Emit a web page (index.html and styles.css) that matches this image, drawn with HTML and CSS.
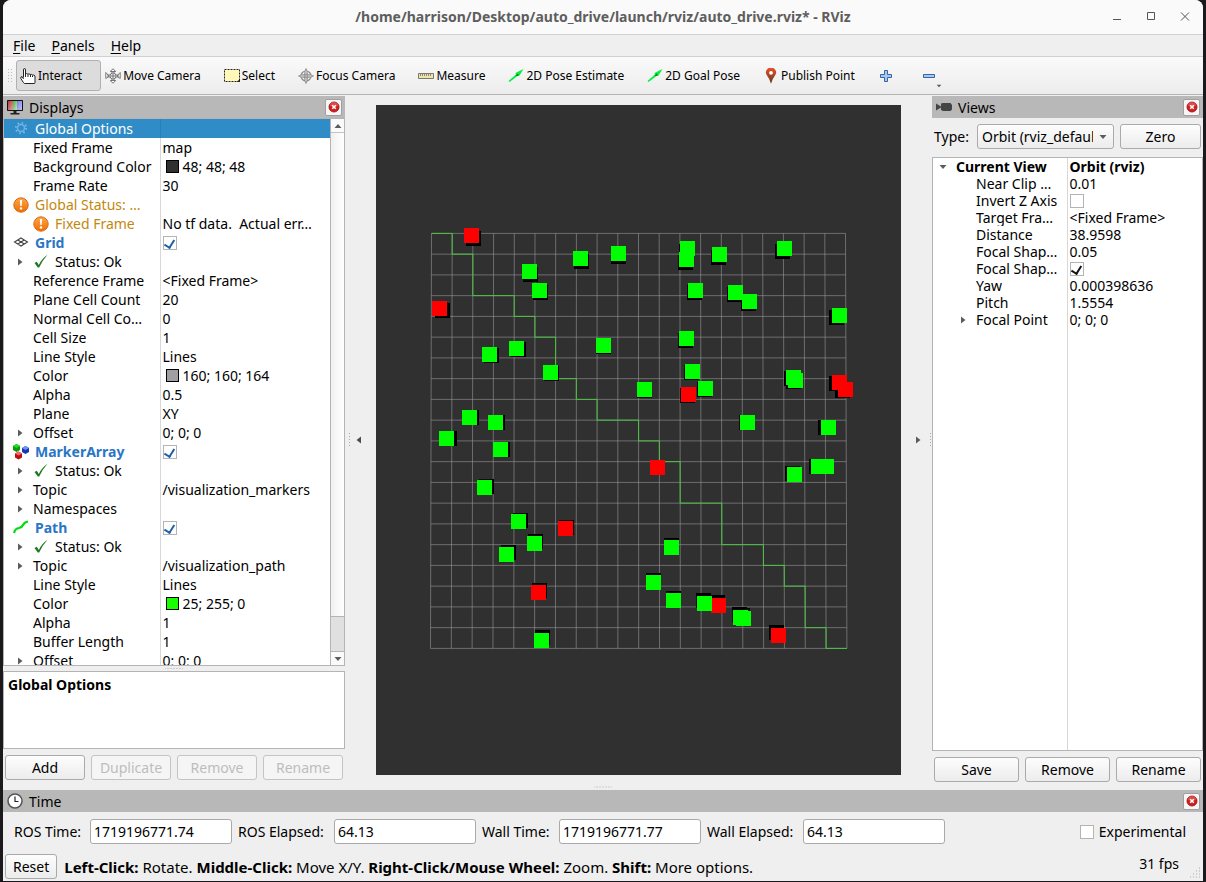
FILE: index.html
```html
<!DOCTYPE html>
<html lang="en">
<head>
<meta charset="utf-8">
<title>/home/harrison/Desktop/auto_drive/launch/rviz/auto_drive.rviz* - RViz</title>
<link rel="stylesheet" href="styles.css">
</head>
<body>
<svg class="defs" aria-hidden="true">
  <defs>
    <linearGradient id="g-orange" x1="0" y1="0" x2="0" y2="1"><stop offset="0" stop-color="#ffa64a"/><stop offset="1" stop-color="#ee6d00"/></linearGradient>
    <linearGradient id="g-pin" x1="0" y1="0" x2="0" y2="1"><stop offset="0" stop-color="#f0512a"/><stop offset="1" stop-color="#5a3a1c"/></linearGradient>
    <linearGradient id="g-r" x1="0" y1="0" x2="1" y2="1"><stop offset="0" stop-color="#b03a3a"/><stop offset="1" stop-color="#e8a0a0"/></linearGradient>
    <linearGradient id="g-g" x1="0" y1="0" x2="1" y2="1"><stop offset="0" stop-color="#4fae4f"/><stop offset="1" stop-color="#b4ecb4"/></linearGradient>
    <linearGradient id="g-b" x1="0" y1="0" x2="1" y2="1"><stop offset="0" stop-color="#7a7ae0"/><stop offset="1" stop-color="#c4c4fa"/></linearGradient>
    <symbol id="close" viewBox="0 0 12 12"><circle cx="6" cy="6" r="5" fill="#cf1f1f" stroke="#a40000" stroke-width=".8"/><path d="M2 5a4 4 0 0 1 8 0q-4 1.500-8 0" fill="#e56a6a" opacity=".6"/><path d="M4.200 4.200l3.600 3.600M7.800 4.200L4.200 7.800" stroke="#fff" stroke-width="1.500"/></symbol>
    <symbol id="warn" viewBox="0 0 16 16"><circle cx="8" cy="8" r="7.200" fill="url(#g-orange)" stroke="#d66a12" stroke-width="1"/><path d="M6.900 3h2.200l-.4 6H7.300z" fill="#fff"/><circle cx="8" cy="11.500" r="1.200" fill="#fff"/></symbol>
    <symbol id="ok" viewBox="0 0 16 16"><path d="M1.500 9l2.300-1.200 2 3.200Q8.500 5 14.500 .8 9 7 6.200 13.500H4.800z" fill="#1f7a1f"/></symbol>
    <symbol id="arrow" viewBox="0 0 16 16"><path d="M.5 13L8 6.500 7.500 5 15.500 1 11.500 7.500 9.500 8 1.500 14z" fill="#00f03c"/><path d="M7.500 8l2-2.500 1.500 2z" fill="#087a20"/></symbol>
    <symbol id="tri-r" viewBox="0 0 6 8"><path d="M1 0.500L5.500 4 1 7.500z" fill="#5c5c5c"/></symbol>
    <symbol id="tri-l" viewBox="0 0 6 8"><path d="M5 0.500L.5 4 5 7.500z" fill="#4c4c4c"/></symbol>
    <symbol id="tri-d" viewBox="0 0 8 6"><path d="M0.500 1h7L4 5z" fill="#5c5c5c"/></symbol>
    <symbol id="tri-u" viewBox="0 0 8 6"><path d="M0.500 5h7L4 1z" fill="#5c5c5c"/></symbol>
  </defs>
</svg>

<div class="window">
  <header class="titlebar">
    <h1>/home/harrison/Desktop/auto_drive/launch/rviz/auto_drive.rviz* - RViz</h1>
    <div class="winctl">
      <button type="button" aria-label="Minimize"><svg width="12" height="12"><path d="M2 8.500h8" stroke="#555"/></svg></button>
      <button type="button" aria-label="Maximize"><svg width="12" height="12"><path d="M2.500 1.500h7v7h-7z" fill="none" stroke="#555"/></svg></button>
      <button type="button" aria-label="Close"><svg width="12" height="12"><path d="M2 1.500l8 8M10 1.500l-8 8" stroke="#555"/></svg></button>
    </div>
  </header>

  <nav class="menubar">
    <button type="button"><u>F</u>ile</button>
    <button type="button"><u>P</u>anels</button>
    <button type="button"><u>H</u>elp</button>
  </nav>

  <div class="toolbar" role="toolbar">
    <span class="grip"></span>
    <button type="button" class="tool active"><svg width="16" height="16" viewBox="0 0 16 16"><path d="M3.500 9.500V2q0-1.500 1-1.500t1 1.500v4q1.200-1 2.300.2 1.200-.8 2.300.3 1.200-.6 2.300.5 1.500-.5 2.600 1v6.500q0 1-1 1H4.500Q3 14.500 2.500 13L.8 10.500Q.5 8.500 2 8.500l1.500 2.500" fill="#fff" stroke="#222"/><path d="M5.500 6v3M8 6.500V9M10.500 7v2M12.500 7.500V9" stroke="#222"/></svg>Interact</button>
    <button type="button" class="tool"><svg width="16" height="16" viewBox="0 0 16 16"><path d="M8 .8l2.800 2.700H5.200zM8 15.200l-2.800-2.700h5.600zM.8 4.500v6L4 8zM15.200 4.500v6L12 8z" fill="#fff" stroke="#777"/><path d="M7 3.500v9M9 3.500v9M2 7h12M2 9h12" stroke="#777"/><circle cx="8" cy="8" r="3" fill="#eee" stroke="#777"/><path d="M8 6v4M6 8h4" stroke="#777"/></svg>Move Camera</button>
    <button type="button" class="tool"><svg width="16" height="16" viewBox="0 0 16 16"><path d="M.5 1.500h15v12H.5z" fill="#fff8b8" stroke="#222" stroke-dasharray="2 1"/><path d="M12.500 14h3.500v-3z" fill="#222"/></svg>Select</button>
    <button type="button" class="tool"><svg width="16" height="16" viewBox="0 0 16 16"><circle cx="8" cy="8" r="5" fill="none" stroke="#888" stroke-width="1.200"/><circle cx="8" cy="8" r="2.500" fill="none" stroke="#888"/><path d="M8 .5l1.200 3v9L8 15.500l-1.200-3v-9zM.5 8l3-1.200h9l3 1.200-3 1.200h-9z" fill="#ccc" stroke="#888" stroke-width=".8"/></svg>Focus Camera</button>
    <button type="button" class="tool"><svg width="16" height="16" viewBox="0 0 16 16"><path d="M.5 5.500h15v5H.5z" fill="#f0e6a0" stroke="#777"/><path d="M2.500 6v2M4.500 6v2M6.500 6v2M8.500 6v2M10.500 6v2M12.500 6v2" stroke="#888"/></svg>Measure</button>
    <button type="button" class="tool"><svg width="16" height="16"><use href="#arrow"/></svg>2D Pose Estimate</button>
    <button type="button" class="tool"><svg width="16" height="16"><use href="#arrow"/></svg>2D Goal Pose</button>
    <button type="button" class="tool"><svg width="16" height="16" viewBox="0 0 16 16"><path d="M8 15.800Q6.800 11 4 7.500a5 5 0 1 1 8 0Q9.200 11 8 15.800z" fill="url(#g-pin)"/><circle cx="8" cy="4.800" r="1.900" fill="#fff"/></svg>Publish Point</button>
    <button type="button" class="tool" aria-label="Add tool"><svg width="16" height="16" viewBox="0 0 16 16"><path d="M6.500 2.500h3v4h4v3h-4v4h-3v-4h-4v-3h4z" fill="#a9c8ec" stroke="#3465a4"/></svg></button>
    <button type="button" class="tool drop" aria-label="Remove tool"><svg width="16" height="16" viewBox="0 0 16 16"><path d="M2.500 6.500h11v3h-11z" fill="#a9c8ec" stroke="#3465a4"/></svg><svg class="caret" width="6" height="4" viewBox="0 0 8 6"><use href="#tri-d"/></svg></button>
  </div>

  <main class="workspace">
    <section class="dock displays">
      <header class="docktitle">
        <svg width="16" height="16" viewBox="0 0 16 16"><path d="M.5 1.500h15v10H.5z" fill="#222" stroke="#111"/><path d="M1 2h5v9H1z" fill="url(#g-r)"/><path d="M6 2h4v9H6z" fill="url(#g-g)"/><path d="M10 2h5v9h-5z" fill="url(#g-b)"/><path d="M6.500 12h3v2.500h-3zM3.500 14h9v1.500h-9z" fill="#222"/></svg>
        <h2>Displays</h2>
        <button type="button" class="x" aria-label="Close Displays"><svg width="12" height="12"><use href="#close"/></svg></button>
      </header>
      <div class="treebox">
        <div class="tree">
          <table>
            <colgroup><col class="c-name"><col></colgroup>
            <tbody>
              <tr class="sel"><td><div class="n top"><svg width="16" height="16" viewBox="0 0 16 16"><circle cx="8" cy="7" r="3.500" fill="none" stroke="#6fb3ea" stroke-width="1.500"/><circle cx="8" cy="7" r="5.200" fill="none" stroke="#7ab8ea" stroke-width="1.800" stroke-dasharray="1.600 2.480"/></svg>Global Options</div></td><td></td></tr>
              <tr><td><div class="n"><i></i>Fixed Frame</div></td><td>map</td></tr>
              <tr><td><div class="n"><i></i>Background Color</div></td><td><span class="sw dark"></span>48; 48; 48</td></tr>
              <tr><td><div class="n"><i></i>Frame Rate</div></td><td>30</td></tr>
              <tr class="warn"><td><div class="n top"><svg width="16" height="16"><use href="#warn"/></svg>Global Status: …</div></td><td></td></tr>
              <tr><td><div class="n amber"><i></i><svg width="16" height="16"><use href="#warn"/></svg>Fixed Frame</div></td><td>No tf data.&nbsp; Actual err…</td></tr>
              <tr class="disp"><td><div class="n top"><svg width="16" height="16" viewBox="0 0 16 16"><path d="M8 3l6.500 4L8 11 1.500 7zM4.800 5l6.500 4M11.200 5L4.800 9" fill="none" stroke="#444" stroke-width="1.100"/></svg>Grid</div></td><td><input type="checkbox" checked aria-label="Grid enabled"></td></tr>
              <tr><td><div class="n"><i><svg width="6" height="8"><use href="#tri-r"/></svg></i><svg width="16" height="16"><use href="#ok"/></svg>Status: Ok</div></td><td></td></tr>
              <tr><td><div class="n"><i></i>Reference Frame</div></td><td>&lt;Fixed Frame&gt;</td></tr>
              <tr><td><div class="n"><i></i>Plane Cell Count</div></td><td>20</td></tr>
              <tr><td><div class="n"><i></i>Normal Cell Co…</div></td><td>0</td></tr>
              <tr><td><div class="n"><i></i>Cell Size</div></td><td>1</td></tr>
              <tr><td><div class="n"><i></i>Line Style</div></td><td>Lines</td></tr>
              <tr><td><div class="n"><i></i>Color</div></td><td><span class="sw grey"></span>160; 160; 164</td></tr>
              <tr><td><div class="n"><i></i>Alpha</div></td><td>0.5</td></tr>
              <tr><td><div class="n"><i></i>Plane</div></td><td>XY</td></tr>
              <tr><td><div class="n"><i><svg width="6" height="8"><use href="#tri-r"/></svg></i>Offset</div></td><td>0; 0; 0</td></tr>
              <tr class="disp"><td><div class="n top"><svg width="16" height="16" viewBox="0 0 16 16"><path d="M0 2l3.500-2L7 2v4L3.500 8 0 6z" fill="#0a9a0a"/><path d="M0 2l3.500-2L7 2 3.500 4z" fill="#19e619"/><path d="M9 4l3.500-2L16 4v4l-3.500 2L9 8z" fill="#1a35b8"/><path d="M9 4l3.500-2L16 4l-3.500 2z" fill="#6f92ff"/><path d="M2 9.500l3.500-2L9 9.500v4l-3.500 2-3.500-2z" fill="#b80f0f"/><path d="M2 9.500l3.500-2L9 9.500l-3.500 2z" fill="#f46a6a"/></svg>MarkerArray</div></td><td><input type="checkbox" checked aria-label="MarkerArray enabled"></td></tr>
              <tr><td><div class="n"><i><svg width="6" height="8"><use href="#tri-r"/></svg></i><svg width="16" height="16"><use href="#ok"/></svg>Status: Ok</div></td><td></td></tr>
              <tr><td><div class="n"><i><svg width="6" height="8"><use href="#tri-r"/></svg></i>Topic</div></td><td>/visualization_markers</td></tr>
              <tr><td><div class="n"><i><svg width="6" height="8"><use href="#tri-r"/></svg></i>Namespaces</div></td><td></td></tr>
              <tr class="disp"><td><div class="n top"><svg width="16" height="16" viewBox="0 0 16 16"><path d="M1 13Q2 8.500 6 8 9 7.500 10 5 11.500 2 15 1.500" fill="none" stroke="#00dc10" stroke-width="2.200"/></svg>Path</div></td><td><input type="checkbox" checked aria-label="Path enabled"></td></tr>
              <tr><td><div class="n"><i><svg width="6" height="8"><use href="#tri-r"/></svg></i><svg width="16" height="16"><use href="#ok"/></svg>Status: Ok</div></td><td></td></tr>
              <tr><td><div class="n"><i><svg width="6" height="8"><use href="#tri-r"/></svg></i>Topic</div></td><td>/visualization_path</td></tr>
              <tr><td><div class="n"><i></i>Line Style</div></td><td>Lines</td></tr>
              <tr><td><div class="n"><i></i>Color</div></td><td><span class="sw green"></span>25; 255; 0</td></tr>
              <tr><td><div class="n"><i></i>Alpha</div></td><td>1</td></tr>
              <tr><td><div class="n"><i></i>Buffer Length</div></td><td>1</td></tr>
              <tr><td><div class="n"><i><svg width="6" height="8"><use href="#tri-r"/></svg></i>Offset</div></td><td>0; 0; 0</td></tr>
            </tbody>
          </table>
        </div>
        <div class="scroll">
          <button type="button" aria-label="Scroll up"><svg width="8" height="6"><use href="#tri-u"/></svg></button>
          <div class="track"></div>
          <div class="thumb"></div>
          <button type="button" aria-label="Scroll down"><svg width="8" height="6"><use href="#tri-d"/></svg></button>
        </div>
      </div>
      <div class="hsplit"></div>
      <div class="desc"><b>Global Options</b></div>
      <div class="btnrow">
        <button type="button" class="btn">Add</button>
        <button type="button" class="btn" disabled>Duplicate</button>
        <button type="button" class="btn" disabled>Remove</button>
        <button type="button" class="btn" disabled>Rename</button>
      </div>
    </section>

    <div class="vsplit"></div>
    <button type="button" class="collapse" aria-label="Hide left panel"><svg width="6" height="8"><use href="#tri-l"/></svg></button>
    <svg class="scene" id="scene" viewBox="376 105 525 670" preserveAspectRatio="xMidYMid slice"></svg>
    <button type="button" class="collapse" aria-label="Hide right panel"><svg width="6" height="8"><use href="#tri-r"/></svg></button>
    <div class="vsplit"></div>

    <section class="dock views">
      <header class="docktitle">
        <svg width="16" height="16" viewBox="0 0 16 16"><path d="M0 4.500L5 7.500V4.500L7 4h7.500L16 6v4.500L14.500 12H7L5 11V8.500L0 11.500z" fill="#444"/></svg>
        <h2>Views</h2>
        <button type="button" class="x" aria-label="Close Views"><svg width="12" height="12"><use href="#close"/></svg></button>
      </header>
      <div class="typerow">
        <label for="vtype">Type:</label>
        <div class="combo">
          <select id="vtype"><option>Orbit (rviz_default_plugins)</option></select>
          <svg width="8" height="6"><use href="#tri-d"/></svg>
        </div>
        <button type="button" class="btn">Zero</button>
      </div>
      <div class="viewtree">
        <table>
          <colgroup><col class="c-name"><col></colgroup>
          <tbody>
            <tr class="head"><td><div class="n"><i><svg width="8" height="6"><use href="#tri-d"/></svg></i>Current View</div></td><td>Orbit (rviz)</td></tr>
            <tr><td><div class="n sub"><i></i>Near Clip …</div></td><td>0.01</td></tr>
            <tr><td><div class="n sub"><i></i>Invert Z Axis</div></td><td><input type="checkbox" class="black" aria-label="Invert Z Axis"></td></tr>
            <tr><td><div class="n sub"><i></i>Target Fra…</div></td><td>&lt;Fixed Frame&gt;</td></tr>
            <tr><td><div class="n sub"><i></i>Distance</div></td><td>38.9598</td></tr>
            <tr><td><div class="n sub"><i></i>Focal Shap…</div></td><td>0.05</td></tr>
            <tr><td><div class="n sub"><i></i>Focal Shap…</div></td><td><input type="checkbox" class="black" checked aria-label="Focal Shape Fixed Size"></td></tr>
            <tr><td><div class="n sub"><i></i>Yaw</div></td><td>0.000398636</td></tr>
            <tr><td><div class="n sub"><i></i>Pitch</div></td><td>1.5554</td></tr>
            <tr><td><div class="n sub"><i><svg width="6" height="8"><use href="#tri-r"/></svg></i>Focal Point</div></td><td>0; 0; 0</td></tr>
          </tbody>
        </table>
      </div>
      <div class="btnrow">
        <button type="button" class="btn">Save</button>
        <button type="button" class="btn">Remove</button>
        <button type="button" class="btn">Rename</button>
      </div>
    </section>
  </main>
  <div class="hsplit outer"></div>

  <section class="time">
    <header class="docktitle">
      <svg width="16" height="16" viewBox="0 0 16 16"><circle cx="8" cy="8" r="7" fill="#fff" stroke="#555" stroke-width="1.500"/><path d="M8 3.500V8.500h3.500" fill="none" stroke="#222" stroke-width="1.200"/></svg>
      <h2>Time</h2>
      <button type="button" class="x" aria-label="Close Time"><svg width="12" height="12"><use href="#close"/></svg></button>
    </header>
    <div class="times">
      <label for="t1">ROS Time:</label><input type="text" id="t1" value="1719196771.74">
      <label for="t2">ROS Elapsed:</label><input type="text" id="t2" value="64.13">
      <label for="t3">Wall Time:</label><input type="text" id="t3" value="1719196771.77">
      <label for="t4">Wall Elapsed:</label><input type="text" id="t4" value="64.13">
      <label class="exp"><input type="checkbox">Experimental</label>
    </div>
  </section>

  <footer class="status">
    <button type="button" class="btn">Reset</button>
    <p><b>Left-Click:</b> Rotate. <b>Middle-Click:</b> Move X/Y. <b>Right-Click/Mouse Wheel:</b> Zoom. <b>Shift:</b> More options.</p>
    <span class="fps">31 fps</span>
    <svg class="sizegrip" width="12" height="12"><path d="M10 1h1M7 4h1M10 4h1M4 7h1M7 7h1M10 7h1M1 10h1M4 10h1M7 10h1M10 10h1" stroke="#aaa"/></svg>
  </footer>
</div>
<script src="scene.js"></script>
</body>
</html>
```
FILE: styles.css
```css
* { box-sizing: border-box; }
body {
  margin: 0;
  height: 100vh;
  padding: 0 3px 1px;
  background: #1b191c;
  font: 14px/18px "Noto Sans", "Open Sans", sans-serif;
  color: #000;
}
button, input, select { font: inherit; color: inherit; margin: 0; }
button { border: 0; background: none; padding: 0; }
h1, h2, p { margin: 0; font-weight: normal; font-size: inherit; }
svg { flex: none; display: block; }
.defs { position: absolute; width: 0; height: 0; }

.window {
  height: 100%;
  display: flex;
  flex-direction: column;
  background: #efefef;
  border-radius: 8px 8px 0 0;
  overflow: hidden;
}

.titlebar {
  height: 35px;
  flex: none;
  display: grid;
  grid-template-columns: 1fr auto 1fr;
  align-items: center;
  background: #fafafa;
  border-bottom: 1px solid #d0d0d0;
}
.titlebar h1 { grid-column: 2; font-size: 14px; font-weight: bold; color: #5e5e5e; }
.winctl { display: flex; justify-content: flex-end; gap: 22px; padding-right: 12px; }

.menubar {
  height: 22px;
  flex: none;
  display: flex;
  gap: 16px;
  padding: 0 10px;
  border-bottom: 1px solid #d0d0d0;
}
.menubar u { text-underline-offset: 2px; }

.toolbar {
  height: 38px;
  flex: none;
  display: flex;
  align-items: center;
  padding-left: 4px;
  background: linear-gradient(#fafafa, #ececec);
  border-bottom: 1px solid #b4b4b4;
  font-size: 12px;
}
.grip {
  width: 9px;
  height: 16px;
  background: radial-gradient(circle, #bbb 0.5px, transparent 1px) 0 0 / 3px 3px;
  background-clip: content-box;
  padding-right: 4px;
}
.tool {
  display: flex;
  align-items: center;
  gap: 2px;
  height: 31px;
  padding: 0 19px 0 4px;
  white-space: nowrap;
}
.tool.active { border: 1px solid #b0b0b0; border-radius: 3px; background: #dcdcdc; padding: 0 18px 0 3px; }
.tool.drop { position: relative; padding: 0 8px; }
.caret { position: absolute; right: 3px; bottom: 3px; }

.workspace { flex: 1; min-height: 0; display: flex; padding-top: 1px; }
.dock { display: flex; flex-direction: column; min-height: 0; }
.displays { flex: 0 0 342px; }
.views { flex: 0 0 271px; }
.docktitle {
  height: 22px;
  flex: none;
  display: flex;
  align-items: center;
  gap: 6px;
  padding: 0 3px 0 4px;
  background: #b8b8b8;
}
.docktitle h2 { flex: 1; padding-top: 2px; }
.x {
  width: 17px;
  height: 17px;
  display: grid;
  place-items: center;
  border: 1px solid #a0a0a0;
  border-radius: 2px;
  background: #f6f6f6;
}

.treebox {
  flex: 1;
  min-height: 0;
  display: flex;
  border: 1px solid #b4b4b4;
  background: #fff;
}
.tree { flex: 1; overflow: hidden; }
table { width: 100%; table-layout: fixed; border-collapse: collapse; }
td { padding: 0; height: 19px; white-space: nowrap; overflow: hidden; }
.tree .c-name { width: 156px; }
td + td { border-left: 1px solid #d8d8d8; padding-left: 2px; }
.n { display: flex; align-items: center; }
.n > svg { margin-right: 6px; }
.n.top { padding-left: 9px; }
.n i { width: 29px; flex: none; padding-left: 13px; }
.sel td { background: #308cc6; color: #fff; border-color: #2b7fb4; }
.warn, .amber { color: #c4870e; }
.disp .n { color: #2a76c6; font-weight: bold; }
.sw {
  display: inline-block;
  width: 13px;
  height: 13px;
  margin: 0 4px 0 3px;
  border: 1px solid #000;
  vertical-align: -1px;
}
.sw.dark { background: #303030; }
.sw.grey { background: #a0a0a4; }
.sw.green { background: #19ff00; }

input[type="checkbox"] {
  appearance: none;
  display: block;
  width: 14px;
  height: 14px;
  border: 1px solid #b4b4b4;
  background: #fff;
}
input[type="checkbox"]:checked::before {
  content: "";
  display: block;
  width: 5px;
  height: 8px;
  margin: 1px auto 0;
  border: solid #1f5fa8;
  border-width: 0 2px 2px 0;
  transform: rotate(32deg);
}
input.black:checked::before { border-color: #111; }

.scroll { width: 14px; display: flex; flex-direction: column; border-left: 1px solid #b4b4b4; background: #fafafa; }
.scroll button { height: 13px; display: grid; place-items: center; }
.track { flex: 1; border-top: 1px solid #c4c4c4; background: linear-gradient(90deg, #f0f0f0, #fff); }
.thumb { height: 36px; border: solid #b4b4b4; border-width: 1px 0; background: #e0e0e0; }

.hsplit {
  height: 5px;
  flex: none;
  background: radial-gradient(circle, #aaa 0.5px, transparent 1px) center / 3px 3px;
  background-clip: content-box;
  padding: 1px calc(50% - 9px);
}
.hsplit.outer { height: 6px; }
.vsplit {
  flex: 0 0 6px;
  align-self: center;
  height: 16px;
  background: radial-gradient(circle, #aaa 0.5px, transparent 1px) 0 0 / 3px 3px;
  background-clip: content-box;
  padding: 0 1px 0 2px;
}
.desc { height: 78px; flex: none; padding: 4px; border: 1px solid #b4b4b4; background: #fff; }
.btnrow { display: grid; grid-auto-flow: column; grid-auto-columns: 1fr; gap: 6px; padding: 6px 2px 4px; }
.btn {
  height: 25px;
  border: 1px solid #aaa;
  border-radius: 3px;
  background: linear-gradient(#fdfdfd, #ececec);
}
.btn:disabled { color: #bdbdbd; border-color: #c4c4c4; background: #f5f5f5; }

.collapse { flex: 0 0 16px; align-self: center; height: 40px; display: grid; place-items: center; }
.scene { flex: 1; min-width: 0; height: auto; margin: 9px; background: #303030; }

.typerow { display: grid; grid-template-columns: 37px 137px 1fr; gap: 6px; align-items: center; padding: 6px 2px 8px; }
.combo { position: relative; }
.combo select {
  appearance: none;
  width: 100%;
  height: 25px;
  padding: 0 20px 0 4px;
  border: 1px solid #aaa;
  border-radius: 3px;
  background: linear-gradient(#fdfdfd, #ececec);
}
.combo svg { position: absolute; right: 7px; top: 10px; }

.viewtree {
  flex: 1;
  border: 1px solid #b4b4b4;
  background: linear-gradient(#d8d8d8, #d8d8d8) 134px 0 / 1px 100% no-repeat #fff;
}
.viewtree .c-name { width: 134px; }
.viewtree td { height: 17px; line-height: 17px; }
.viewtree .n i { width: 23px; padding-left: 6px; }
.viewtree .n.sub i { width: 43px; padding-left: 27px; }
.head { font-weight: bold; }
.views .btnrow { padding-bottom: 2px; }

.times {
  display: grid;
  grid-template-columns: 70px 142px 90px 142px 71px 142px 90px 142px 1fr;
  align-items: center;
  gap: 6px;
  padding: 7px 17px 6px 11px;
}
.times input[type="text"] {
  width: 100%;
  height: 25px;
  padding: 0 3px;
  border: 1px solid #aaa;
  border-radius: 3px;
  background: #fff;
}
.times label { padding-top: 1px; }
.exp { display: flex; align-items: center; gap: 5px; justify-self: end; }

.status { display: flex; align-items: center; gap: 7px; padding: 4px 2px 2px; }
.status .btn { padding: 0 7px; }
.status p { flex: 1; font-size: 15px; }
.fps { padding: 0 3px 5px 0; }
.sizegrip { align-self: flex-end; }
```
FILE: scene.js
```js
(function () {
  var NS = "http://www.w3.org/2000/svg";
  var svg = document.getElementById("scene");

  function add(tag, attrs) {
    var el = document.createElementNS(NS, tag);
    for (var k in attrs) el.setAttribute(k, attrs[k]);
    svg.appendChild(el);
  }

  // The camera is tilted slightly, so the lower edge of the grid is wider.
  function at(col, row) {
    var t = row / 20;
    return [431.5 - t + col * (20.7 + 0.12 * t), 233.4 + row * 20.75];
  }

  var d = "";
  for (var i = 0; i <= 20; i++) {
    d += "M" + at(i, 0) + "L" + at(i, 20) + "M" + at(0, i) + "L" + at(20, i);
  }
  add("path", { d: d, stroke: "#a0a0a4", "stroke-opacity": 0.55, fill: "none" });

  var route = [[0,0],[1,0],[1,1],[2,1],[2,3],[4,3],[4,4],[5,4],[5,5],[6,5],[6,7],[7,7],[7,8],[8,8],[8,9],[10,9],
    [10,10],[11,10],[11,11],[12,11],[12,13],[14,13],[14,15],[16,15],[16,16],[17,16],[17,17],[18,17],[18,19],[19,19],[19,20],[20,20]];
  add("path", {
    d: "M" + route.map(function (p) { return at(p[0], p[1]).join(","); }).join("L"),
    stroke: "#4cc443", fill: "none"
  });

  var green = [[573,251],[611,246],[522,264],[532,283],[482,347],[509,341],[543,365],[596,338],[462,410],[488,415],
    [439,431],[493,442],[477,480],[511,514],[527,536],[499,547],[534,633],[680,241],[679,252],[712,247],[777,241],
    [688,283],[728,285],[742,294],[832,308],[679,331],[685,364],[698,381],[637,382],[786,370],[788,373],[740,415],
    [821,420],[787,467],[811,459],[819,459],[664,540],[646,575],[666,593],[697,596],[733,610],[736,611]];
  var red = [[464,228],[432,301],[558,521],[531,585],[681,387],[832,375],[838,382],[650,460],[711,598],[771,628]];

  function side(p) {
    add("rect", {
      x: p[0] + Math.round((631 - p[0]) / 75), y: p[1] + Math.round((433 - p[1]) / 65),
      width: 15, height: 15, fill: "#000"
    });
  }
  function face(color) {
    return function (p) { add("rect", { x: p[0], y: p[1], width: 15, height: 15, fill: color }); };
  }
  green.concat(red).forEach(side);
  red.forEach(face("#ff0000"));
  green.forEach(face("#00ff00"));
})();
```
